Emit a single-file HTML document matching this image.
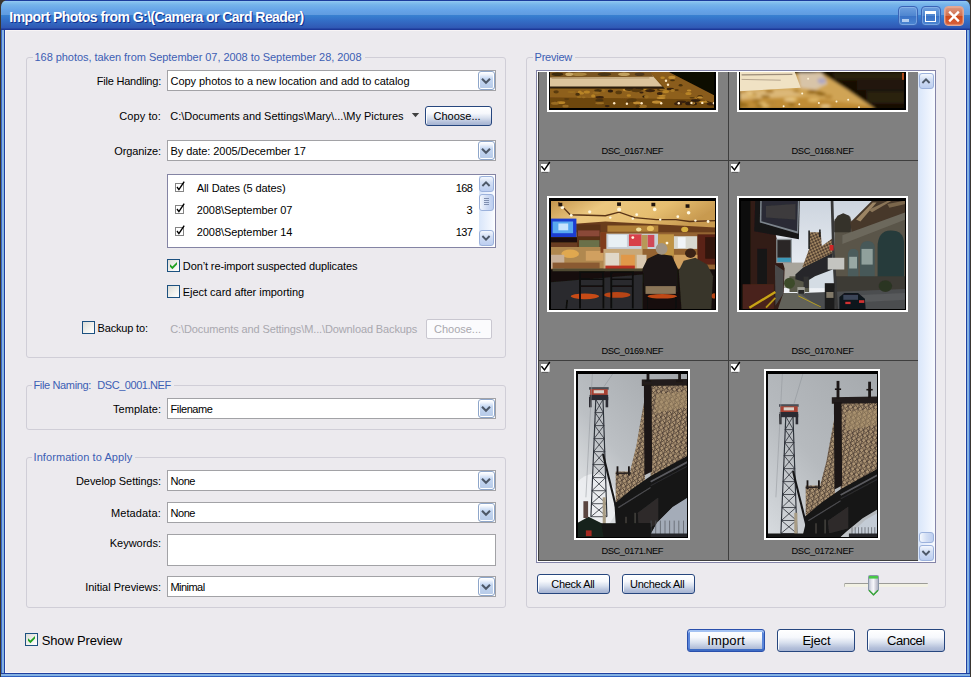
<!DOCTYPE html>
<html><head><meta charset="utf-8">
<style>
html,body{margin:0;padding:0;}
body{width:971px;height:677px;position:relative;overflow:hidden;background:#3a3630;font-family:"Liberation Sans",sans-serif;font-size:11px;color:#000;}
#win{position:absolute;left:1px;top:0;width:969px;height:677px;background:linear-gradient(to right,#3868c8 0,#3868c8 1px,#84b2e2 1.2px,#84b2e2 2.6px,#2040a0 3px,#2040a0 965px,#2040a0 966px,#84b2e2 966.4px,#84b2e2 967.8px,#3868c8 968px,#3868c8 969px);border-radius:7px 7px 0 0;overflow:hidden;}
#bot{position:absolute;left:0;top:673px;width:969px;height:4px;background:linear-gradient(to bottom,#2040a0 0,#2040a0 1px,#84b2e2 1.3px,#84b2e2 2.7px,#3060c0 3px,#3060c0 4px);}
#title{position:absolute;left:0;top:0;width:969px;height:30px;background:linear-gradient(to bottom,#1c3c9c 0,#1c3c9c 1px,#9ccaf4 1px,#86c2ee 2px,#74b2ea 5px,#66a4e8 10px,#609ce0 15px,#3880d0 15.5px,#3470c8 20px,#3058b4 28px,#1c3898 29px,#1c3898 30px);}
#client{position:absolute;left:4px;top:30px;width:961px;height:643px;background:#eceaee;border:1px solid #f8f4f5;box-sizing:border-box;}
#L{position:absolute;left:0;top:0;width:971px;height:677px;}
#L div,#L svg{position:absolute;}
.lbl{white-space:pre;}
.gb{border:1px solid #d0ced7;border-radius:3px;box-sizing:border-box;}
.gm{background:#eceaee;}
.combo{box-sizing:border-box;border:1px solid #a2a2a6;background:#fff;}
.dd{box-sizing:border-box;background:linear-gradient(to bottom,#ffffff 0,#f4f8fe 12%,#c6d8f2 38%,#bdd0ec 70%,#b6cae8 100%);border:1px solid #8ea6ca;border-radius:3px;box-shadow:inset 0 0 0 1px #fff;}
.btn{box-sizing:border-box;border:1px solid #26467e;border-radius:3px;background:linear-gradient(to bottom,#ffffff 0,#f6f8fc 35%,#d8e0ee 60%,#b4c0da 85%,#a6b4d2 100%);box-shadow:inset 1px 1px 0 rgba(255,255,255,0.9);}
.cb{width:13px;height:13px;box-sizing:border-box;border:1px solid #1c5180;background:linear-gradient(135deg,#dcdcd7 0,#f3f3ef 60%,#fff 100%);}
</style></head><body>
<div id="win"><div id="title"></div><div id="client"></div><div id="bot"></div></div>
<div id="L">
<div class="lbl" style="left:9.3px;top:8.8px;font-size:14px;line-height:16px;letter-spacing:-0.547px;color:#fff;font-weight:bold;text-shadow:1px 1px 0 #123090;">Import Photos from G:\(Camera or Card Reader)</div>
<div style="left:897.5px;top:6px;width:20px;height:20px;box-sizing:border-box;border:1px solid #3a64b6;border-radius:4px;background:linear-gradient(to bottom,#6e9fde 0,#4f86d0 48%,#3a72c6 52%,#4c86d2 100%);box-shadow:inset 0 0 0 1px rgba(170,205,245,0.45);"></div>
<div style="left:920.5px;top:6px;width:20px;height:20px;box-sizing:border-box;border:1px solid #3a64b6;border-radius:4px;background:linear-gradient(to bottom,#6e9fde 0,#4f86d0 48%,#3a72c6 52%,#4c86d2 100%);box-shadow:inset 0 0 0 1px rgba(170,205,245,0.45);"></div>
<div style="left:943.5px;top:6px;width:20px;height:20px;box-sizing:border-box;border:1px solid #e0a898;border-radius:4px;background:linear-gradient(to bottom,#dc9880 0,#d07050 48%,#cf4a1c 52%,#d8623c 100%);box-shadow:inset 0 0 0 1px rgba(255,220,200,0.25);"></div>
<div style="left:902px;top:19px;width:7px;height:3px;background:#b4cef0;"></div>
<div style="left:925px;top:11px;width:11px;height:11px;box-sizing:border-box;border:1.5px solid #fff;border-top:3px solid #fff;"></div>
<svg style="left:943.5px;top:6px" width="20" height="20"><path d="M5.2 5.6 L14.8 15.4 M14.8 5.6 L5.2 15.4" stroke="#fff" stroke-width="2.3" stroke-linecap="butt"/></svg>
<div class="gb" style="left:26px;top:57px;width:480px;height:301px;"></div>
<div class="gm" style="left:32.5px;top:51px;width:332.0px;height:13px;"></div>
<div class="lbl" style="left:34.5px;top:50.5px;font-size:11px;line-height:13px;letter-spacing:-0.051px;color:#3c5eb4;">168 photos, taken from September 07, 2008 to September 28, 2008</div>
<div class="gb" style="left:26px;top:385px;width:480px;height:45px;"></div>
<div class="gm" style="left:31.5px;top:379px;width:142.2px;height:13px;"></div>
<div class="lbl" style="left:33.5px;top:378.5px;font-size:11px;line-height:13px;letter-spacing:-0.354px;color:#3c5eb4;">File Naming:</div>
<div class="lbl" style="left:97.3px;top:378.5px;font-size:11px;line-height:13px;letter-spacing:-0.456px;color:#3c5eb4;">DSC_0001.NEF</div>
<div class="gb" style="left:26px;top:457px;width:480px;height:151px;"></div>
<div class="gm" style="left:31.5px;top:451px;width:103.80000000000001px;height:13px;"></div>
<div class="lbl" style="left:33.5px;top:450.5px;font-size:11px;line-height:13px;letter-spacing:0.078px;color:#3c5eb4;">Information to Apply</div>
<div class="gb" style="left:526px;top:57px;width:420px;height:551px;"></div>
<div class="gm" style="left:532.6px;top:51px;width:42.39999999999998px;height:13px;"></div>
<div class="lbl" style="left:534.6px;top:50.5px;font-size:11px;line-height:13px;letter-spacing:-0.246px;color:#3c5eb4;">Preview</div>
<div class="lbl" style="left:96.8px;top:74.8px;font-size:11px;line-height:13px;letter-spacing:-0.219px;color:#000;">File Handling:</div>
<div class="combo" style="left:167px;top:70px;width:329px;height:21px;"></div>
<div class="dd" style="left:478px;top:71px;width:17.3px;height:19px;"></div>
<svg style="left:480.1px;top:74.9px" width="12" height="12"><g transform="translate(6,6) scale(1.0)"><path d="M-4 -2.2 L0 1.8 L4 -2.2" fill="none" stroke="#4d5868" stroke-width="2.1" stroke-linecap="butt" stroke-linejoin="miter"/></g></svg>
<div class="lbl" style="left:170.5px;top:74.8px;font-size:11px;line-height:13px;letter-spacing:-0.041px;color:#000;">Copy photos to a new location and add to catalog</div>
<div class="lbl" style="left:119.2px;top:109.5px;font-size:11px;line-height:13px;letter-spacing:0.104px;color:#000;">Copy to:</div>
<div class="lbl" style="left:170.3px;top:109.5px;font-size:11px;line-height:13px;letter-spacing:-0.020px;color:#000;">C:\Documents and Settings\Mary\...\My Pictures</div>
<svg style="left:411px;top:112px" width="10" height="6"><path d="M0.8 1 L8.2 1 L4.5 5.2 Z" fill="#404040"/></svg>
<div class="btn" style="left:425px;top:106px;width:67px;height:20px;"></div>
<div class="lbl" style="left:433.6px;top:109.5px;font-size:11px;line-height:13px;letter-spacing:-0.022px;color:#000;">Choose...</div>
<div class="lbl" style="left:114.3px;top:144.8px;font-size:11px;line-height:13px;letter-spacing:-0.111px;color:#000;">Organize:</div>
<div class="combo" style="left:167px;top:140px;width:329px;height:21px;"></div>
<div class="dd" style="left:478px;top:141px;width:17.3px;height:19px;"></div>
<svg style="left:480.1px;top:144.9px" width="12" height="12"><g transform="translate(6,6) scale(1.0)"><path d="M-4 -2.2 L0 1.8 L4 -2.2" fill="none" stroke="#4d5868" stroke-width="2.1" stroke-linecap="butt" stroke-linejoin="miter"/></g></svg>
<div class="lbl" style="left:170.5px;top:144.8px;font-size:11px;line-height:13px;letter-spacing:-0.067px;color:#000;">By date: 2005/December 17</div>
<div style="left:167px;top:174px;width:329px;height:74px;box-sizing:border-box;border:1px solid #8484a4;background:#fff;"></div>
<svg style="left:174.5px;top:180.5px" width="12" height="12"><rect x="0" y="2" width="9" height="9" fill="#848484"/><rect x="1" y="3" width="7" height="7" fill="#fff"/><path d="M2 6 L3.9 8.6 L9.2 0.6" fill="none" stroke="#000" stroke-width="1.4"/></svg>
<div class="lbl" style="left:196.7px;top:181.7px;font-size:11px;line-height:13px;letter-spacing:-0.083px;color:#000;">All Dates (5 dates)</div>
<div class="lbl" style="left:455.8px;top:181.7px;font-size:11px;line-height:13px;letter-spacing:-0.586px;color:#000;">168</div>
<svg style="left:174.5px;top:202.5px" width="12" height="12"><rect x="0" y="2" width="9" height="9" fill="#848484"/><rect x="1" y="3" width="7" height="7" fill="#fff"/><path d="M2 6 L3.9 8.6 L9.2 0.6" fill="none" stroke="#000" stroke-width="1.4"/></svg>
<div class="lbl" style="left:196.7px;top:203.7px;font-size:11px;line-height:13px;letter-spacing:-0.055px;color:#000;">2008\September 07</div>
<div class="lbl" style="left:466.6px;top:203.7px;font-size:11px;line-height:13px;letter-spacing:-0.325px;color:#000;">3</div>
<svg style="left:174.5px;top:224.5px" width="12" height="12"><rect x="0" y="2" width="9" height="9" fill="#848484"/><rect x="1" y="3" width="7" height="7" fill="#fff"/><path d="M2 6 L3.9 8.6 L9.2 0.6" fill="none" stroke="#000" stroke-width="1.4"/></svg>
<div class="lbl" style="left:196.7px;top:225.7px;font-size:11px;line-height:13px;letter-spacing:-0.055px;color:#000;">2008\September 14</div>
<div class="lbl" style="left:455.8px;top:225.7px;font-size:11px;line-height:13px;letter-spacing:-0.586px;color:#000;">137</div>
<div style="left:479px;top:176px;width:14.800000000000011px;height:69.80000000000001px;background:linear-gradient(to right,#d9e6fa 0,#ecf2fd 60%,#f8fbff 100%);"></div>
<div style="left:479px;top:176px;width:14.800000000000011px;height:16px;box-sizing:border-box;border:1px solid #9cb2dc;border-radius:3px;background:linear-gradient(to bottom,#f4f8fe 0,#d2def4 40%,#bccef0 100%);"></div>
<svg style="left:480.4px;top:178.0px" width="12" height="12"><g transform="translate(6,6) scale(0.9)"><path d="M-4 2.2 L0 -1.8 L4 2.2" fill="none" stroke="#4d5868" stroke-width="2.1" stroke-linecap="butt" stroke-linejoin="miter"/></g></svg>
<div style="left:479px;top:229.8px;width:14.800000000000011px;height:16px;box-sizing:border-box;border:1px solid #9cb2dc;border-radius:3px;background:linear-gradient(to bottom,#f4f8fe 0,#d2def4 40%,#bccef0 100%);"></div>
<svg style="left:480.4px;top:232.3px" width="12" height="12"><g transform="translate(6,6) scale(0.9)"><path d="M-4 -2.2 L0 1.8 L4 -2.2" fill="none" stroke="#4d5868" stroke-width="2.1" stroke-linecap="butt" stroke-linejoin="miter"/></g></svg>
<div style="left:479px;top:193.6px;width:14.800000000000011px;height:17.700000000000017px;box-sizing:border-box;border:1px solid #9cb2dc;border-radius:3px;background:linear-gradient(to right,#f4f8fe 0,#d2def4 50%,#bccef0 100%);"></div>
<div style="left:483.5px;top:198.4px;width:5.800000000000011px;height:1px;background:#8090b0;"></div>
<div style="left:483.5px;top:200.4px;width:5.800000000000011px;height:1px;background:#8090b0;"></div>
<div style="left:483.5px;top:202.4px;width:5.800000000000011px;height:1px;background:#8090b0;"></div>
<div style="left:483.5px;top:204.4px;width:5.800000000000011px;height:1px;background:#8090b0;"></div>
<div class="cb" style="left:167px;top:259px;"></div>
<svg style="left:167px;top:259px" width="13" height="13"><path d="M3 5.2 L5.4 7.6 L10 3 L10 5.6 L5.4 10.2 L3 7.8 Z" fill="#21a121"/></svg>
<div class="lbl" style="left:182.8px;top:259.7px;font-size:11px;line-height:13px;letter-spacing:-0.112px;color:#000;">Don’t re-import suspected duplicates</div>
<div class="cb" style="left:167px;top:285px;"></div>
<div class="lbl" style="left:182.8px;top:285.5px;font-size:11px;line-height:13px;letter-spacing:-0.034px;color:#000;">Eject card after importing</div>
<div class="cb" style="left:82px;top:321px;"></div>
<div class="lbl" style="left:97.6px;top:321.5px;font-size:11px;line-height:13px;letter-spacing:-0.178px;color:#000;">Backup to:</div>
<div class="lbl" style="left:170.3px;top:322.8px;font-size:11px;line-height:13px;letter-spacing:-0.119px;color:#a9a8ae;">C:\Documents and Settings\M...\Download Backups</div>
<div style="left:425.5px;top:319px;width:66.5px;height:19.5px;box-sizing:border-box;border:1px solid #c9c7d0;border-radius:2px;background:#fbfbfd;"></div>
<div class="lbl" style="left:434.0px;top:323.1px;font-size:11px;line-height:13px;letter-spacing:-0.010px;color:#a9a8ae;">Choose...</div>
<div class="lbl" style="left:113.0px;top:402.7px;font-size:11px;line-height:13px;letter-spacing:0.033px;color:#000;">Template:</div>
<div class="combo" style="left:167px;top:398px;width:329px;height:21px;"></div>
<div class="dd" style="left:478px;top:399px;width:17.3px;height:19px;"></div>
<svg style="left:480.1px;top:402.9px" width="12" height="12"><g transform="translate(6,6) scale(1.0)"><path d="M-4 -2.2 L0 1.8 L4 -2.2" fill="none" stroke="#4d5868" stroke-width="2.1" stroke-linecap="butt" stroke-linejoin="miter"/></g></svg>
<div class="lbl" style="left:170.5px;top:402.8px;font-size:11px;line-height:13px;letter-spacing:-0.394px;color:#000;">Filename</div>
<div class="lbl" style="left:76.0px;top:474.5px;font-size:11px;line-height:13px;letter-spacing:-0.072px;color:#000;">Develop Settings:</div>
<div class="combo" style="left:167px;top:470px;width:329px;height:21px;"></div>
<div class="dd" style="left:478px;top:471px;width:17.3px;height:19px;"></div>
<svg style="left:480.1px;top:474.9px" width="12" height="12"><g transform="translate(6,6) scale(1.0)"><path d="M-4 -2.2 L0 1.8 L4 -2.2" fill="none" stroke="#4d5868" stroke-width="2.1" stroke-linecap="butt" stroke-linejoin="miter"/></g></svg>
<div class="lbl" style="left:170.5px;top:474.8px;font-size:11px;line-height:13px;letter-spacing:-0.449px;color:#000;">None</div>
<div class="lbl" style="left:110.9px;top:506.9px;font-size:11px;line-height:13px;letter-spacing:0.131px;color:#000;">Metadata<span style="position:static">:</span></div>
<div class="combo" style="left:167px;top:502px;width:329px;height:21px;"></div>
<div class="dd" style="left:478px;top:503px;width:17.3px;height:19px;"></div>
<svg style="left:480.1px;top:506.9px" width="12" height="12"><g transform="translate(6,6) scale(1.0)"><path d="M-4 -2.2 L0 1.8 L4 -2.2" fill="none" stroke="#4d5868" stroke-width="2.1" stroke-linecap="butt" stroke-linejoin="miter"/></g></svg>
<div class="lbl" style="left:170.5px;top:506.8px;font-size:11px;line-height:13px;letter-spacing:-0.449px;color:#000;">None</div>
<div class="lbl" style="left:109.8px;top:536.7px;font-size:11px;line-height:13px;letter-spacing:-0.018px;color:#000;">Keywords:</div>
<div class="combo" style="left:167px;top:534px;width:329px;height:32px;"></div>
<div class="lbl" style="left:85.2px;top:580.9px;font-size:11px;line-height:13px;letter-spacing:-0.037px;color:#000;">Initial Previews:</div>
<div class="combo" style="left:167px;top:576px;width:329px;height:21px;"></div>
<div class="dd" style="left:478px;top:577px;width:17.3px;height:19px;"></div>
<svg style="left:480.1px;top:580.9px" width="12" height="12"><g transform="translate(6,6) scale(1.0)"><path d="M-4 -2.2 L0 1.8 L4 -2.2" fill="none" stroke="#4d5868" stroke-width="2.1" stroke-linecap="butt" stroke-linejoin="miter"/></g></svg>
<div class="lbl" style="left:170.5px;top:580.8px;font-size:11px;line-height:13px;letter-spacing:-0.544px;color:#000;">Minimal</div>
<div class="cb" style="left:25px;top:633px;"></div>
<svg style="left:25px;top:633px" width="13" height="13"><path d="M3 5.2 L5.4 7.6 L10 3 L10 5.6 L5.4 10.2 L3 7.8 Z" fill="#21a121"/></svg>
<div class="lbl" style="left:41.8px;top:632.5px;font-size:13px;line-height:15px;letter-spacing:-0.173px;color:#000;">Show Preview</div>
<div class="btn" style="left:687px;top:629px;width:78px;height:23px;border-color:#2a50ac;box-shadow:inset 0 2px 0 0 #a4c2f2,inset 0 -2px 0 0 #3e6cc4,inset 2px 0 0 0 #5a86da,inset -2px 0 0 0 #5a86da;"></div>
<div class="lbl" style="left:707.2px;top:633.0px;font-size:13px;line-height:15px;letter-spacing:0.159px;color:#000;">Import</div>
<div class="btn" style="left:777px;top:629px;width:78px;height:23px;"></div>
<div class="lbl" style="left:802.4px;top:633.0px;font-size:13px;line-height:15px;letter-spacing:-0.201px;color:#000;">Eject</div>
<div class="btn" style="left:867px;top:629px;width:78px;height:23px;"></div>
<div class="lbl" style="left:887.0px;top:633.0px;font-size:13px;line-height:15px;letter-spacing:-0.445px;color:#000;">Cancel</div>
<div class="btn" style="left:537px;top:574px;width:73px;height:20px;"></div>
<div class="lbl" style="left:551.3px;top:577.5px;font-size:11px;line-height:13px;letter-spacing:-0.295px;color:#000;">Check All</div>
<div class="btn" style="left:622px;top:574px;width:73px;height:20px;"></div>
<div class="lbl" style="left:630.0px;top:577.5px;font-size:11px;line-height:13px;letter-spacing:-0.280px;color:#000;">Uncheck All</div>
<div style="left:844px;top:583px;width:84px;height:4px;box-sizing:border-box;border-top:1px solid #9c9c98;border-left:1px solid #b8b8b0;border-radius:1px;background:#f2f1e4;"></div>
<svg style="left:868px;top:575px" width="11" height="21"><defs><linearGradient id="sg" x1="0" x2="1" y1="0" y2="0"><stop offset="0" stop-color="#b8bccc"/><stop offset="0.3" stop-color="#e6e6ee"/><stop offset="0.5" stop-color="#f6f6fa"/><stop offset="0.75" stop-color="#ccccd8"/><stop offset="1" stop-color="#a8acbc"/></linearGradient></defs>
<path d="M1.5 0.5 L9.5 0.5 Q10.5 0.5 10.5 1.5 L10.5 15 L5.5 20.3 L0.5 15 L0.5 1.5 Q0.5 0.5 1.5 0.5Z" fill="url(#sg)" stroke="#8a96a8" stroke-width="1"/>
<path d="M1 1 L10 1 L10 3.6 L1 3.6Z" fill="#48c848"/>
<path d="M1 15.2 L5.5 19.8 L10 15.2" fill="none" stroke="#38a838" stroke-width="1.4"/></svg>
<div style="left:536px;top:70px;width:400px;height:493px;box-sizing:border-box;border:1px solid #8484a8;background:#fff;"></div>
<div style="left:538px;top:72px;width:380px;height:489px;background:#808080;overflow:hidden;" id="pv"></div>
<div style="left:538px;top:72px;width:1px;height:489px;background:#3e3e3e;"></div>
<div style="left:728px;top:72px;width:1px;height:489px;background:#3e3e3e;"></div>
<div style="left:538px;top:160px;width:380px;height:1px;background:#3e3e3e;"></div>
<div style="left:538px;top:360px;width:380px;height:1px;background:#3e3e3e;"></div>
<div style="left:538px;top:560px;width:380px;height:1px;background:#3e3e3e;"></div>
<div style="left:918px;top:72.5px;width:16.5px;height:488.0px;background:linear-gradient(to right,#d9e6fa 0,#ecf2fd 60%,#f8fbff 100%);"></div>
<div style="left:919px;top:72.5px;width:14.600000000000023px;height:16px;box-sizing:border-box;border:1px solid #9cb2dc;border-radius:3px;background:linear-gradient(to bottom,#f4f8fe 0,#d2def4 40%,#bccef0 100%);"></div>
<svg style="left:920.3px;top:74.5px" width="12" height="12"><g transform="translate(6,6) scale(0.9)"><path d="M-4 2.2 L0 -1.8 L4 2.2" fill="none" stroke="#4d5868" stroke-width="2.1" stroke-linecap="butt" stroke-linejoin="miter"/></g></svg>
<div style="left:919px;top:544.5px;width:14.600000000000023px;height:16px;box-sizing:border-box;border:1px solid #9cb2dc;border-radius:3px;background:linear-gradient(to bottom,#f4f8fe 0,#d2def4 40%,#bccef0 100%);"></div>
<svg style="left:920.3px;top:547.0px" width="12" height="12"><g transform="translate(6,6) scale(0.9)"><path d="M-4 -2.2 L0 1.8 L4 -2.2" fill="none" stroke="#4d5868" stroke-width="2.1" stroke-linecap="butt" stroke-linejoin="miter"/></g></svg>
<div style="left:919px;top:531.5px;width:14.600000000000023px;height:11.5px;box-sizing:border-box;border:1px solid #9cb2dc;border-radius:3px;background:linear-gradient(to right,#f4f8fe 0,#d2def4 50%,#bccef0 100%);"></div>
<svg style="left:540px;top:160px" width="13" height="14"><rect x="1" y="4" width="8.6" height="7.8" fill="#fff"/><rect x="2" y="12" width="6" height="0.8" fill="#585858"/><path d="M1.4 6.3 L4.5 9.9 L9.8 2" fill="none" stroke="#000" stroke-width="1.45"/></svg>
<svg style="left:540px;top:360px" width="13" height="14"><rect x="1" y="4" width="8.6" height="7.8" fill="#fff"/><rect x="2" y="12" width="6" height="0.8" fill="#585858"/><path d="M1.4 6.3 L4.5 9.9 L9.8 2" fill="none" stroke="#000" stroke-width="1.45"/></svg>
<svg style="left:730px;top:160px" width="13" height="14"><rect x="1" y="4" width="8.6" height="7.8" fill="#fff"/><rect x="2" y="12" width="6" height="0.8" fill="#585858"/><path d="M1.4 6.3 L4.5 9.9 L9.8 2" fill="none" stroke="#000" stroke-width="1.45"/></svg>
<svg style="left:730px;top:360px" width="13" height="14"><rect x="1" y="4" width="8.6" height="7.8" fill="#fff"/><rect x="2" y="12" width="6" height="0.8" fill="#585858"/><path d="M1.4 6.3 L4.5 9.9 L9.8 2" fill="none" stroke="#000" stroke-width="1.45"/></svg>
<div class="lbl" style="left:601.4px;top:145.5px;font-size:9.3px;line-height:11.3px;letter-spacing:-0.423px;color:#000;">DSC_0167.NEF</div>
<div class="lbl" style="left:791.5px;top:145.5px;font-size:9.3px;line-height:11.3px;letter-spacing:-0.389px;color:#000;">DSC_0168.NEF</div>
<div class="lbl" style="left:601.4px;top:345.6px;font-size:9.3px;line-height:11.3px;letter-spacing:-0.423px;color:#000;">DSC_0169.NEF</div>
<div class="lbl" style="left:791.5px;top:345.6px;font-size:9.3px;line-height:11.3px;letter-spacing:-0.389px;color:#000;">DSC_0170.NEF</div>
<div class="lbl" style="left:601.4px;top:545.6px;font-size:9.3px;line-height:11.3px;letter-spacing:-0.423px;color:#000;">DSC_0171.NEF</div>
<div class="lbl" style="left:791.5px;top:545.6px;font-size:9.3px;line-height:11.3px;letter-spacing:-0.389px;color:#000;">DSC_0172.NEF</div>
<div style="left:547px;top:196px;width:171px;height:116px;background:#fff;"></div>
<div style="left:549px;top:198px;width:167px;height:112px;background:#000;"></div>
<svg style="left:550.5px;top:200.7px" width="164" height="108.3" viewBox="0 0 164 108.3" preserveAspectRatio="none"><defs><filter id="ba1" x="-5%" y="-5%" width="110%" height="110%"><feGaussianBlur stdDeviation="0.5"/></filter><filter id="ba2" x="-5%" y="-5%" width="110%" height="110%"><feGaussianBlur stdDeviation="1.6"/></filter></defs><defs><linearGradient id="ceil" x1="0" x2="1" y1="0" y2="0.3"><stop offset="0" stop-color="#c09048"/><stop offset="0.35" stop-color="#ecc880"/><stop offset="0.7" stop-color="#e6be70"/><stop offset="1" stop-color="#c89a50"/></linearGradient></defs><g filter="url(#ba1)"><rect x="-2" y="-2" width="170" height="115" fill="#3a2414"/><rect x="-2.3" y="-2.0" width="168.3" height="29.4" fill="url(#ceil)" /><polygon points="0.0,24.5 54.4,20.5 164.6,26.4 164.6,35.2 54.4,31.3 0.0,38.2" fill="#6a3c1c" /><rect x="0.0" y="31.3" width="164.6" height="37.2" fill="#946430" /><rect x="0.0" y="17.6" width="25.4" height="18.6" fill="#1c3cd0" /><rect x="1.6" y="20.5" width="20.5" height="11.7" fill="#58a8f0" /><rect x="7.4" y="22.5" width="9.8" height="6.8" fill="#c8e4fc" /><rect x="0.0" y="36.2" width="26.6" height="5.5" fill="#1a100a" /><rect x="0.0" y="41.7" width="26.0" height="4.7" fill="#6a3c20" /><rect x="26.0" y="23.5" width="23.5" height="24.5" fill="#5a3018" /><rect x="27.0" y="29.4" width="21.5" height="5.9" fill="#8a4838" /><rect x="28.0" y="39.1" width="20.5" height="8.8" fill="#6a7048" /><rect x="0.0" y="46.0" width="52.4" height="21.5" fill="#b08850" /><ellipse cx="19.2" cy="52.8" rx="8.8" ry="4.3" fill="#e0a850" /><rect x="0.0" y="53.8" width="13.3" height="13.7" fill="#c8b098" /><rect x="34.8" y="49.9" width="17.6" height="9.8" fill="#d0a060" /><rect x="1.6" y="61.6" width="47.0" height="5.9" fill="#8a5a30" /><rect x="49.5" y="31.3" width="5.9" height="20.5" fill="#803c1c" /><rect x="55.4" y="32.7" width="51.9" height="15.3" fill="#c8d0d8" /><rect x="57.3" y="33.9" width="18.6" height="12.1" fill="#e8f0f4" /><rect x="77.9" y="33.3" width="12.7" height="11.7" fill="#d84048" /><rect x="96.5" y="33.9" width="6.8" height="12.1" fill="#d04858" /><rect x="90.6" y="33.9" width="5.9" height="14.1" fill="#b89858" /><rect x="107.2" y="33.3" width="15.7" height="21.5" fill="#c09444" /><rect x="122.9" y="35.2" width="23.5" height="12.7" fill="#d8d8d0" /><rect x="126.8" y="36.2" width="7.8" height="10.8" fill="#f0f4f8" /><rect x="146.4" y="33.3" width="18.2" height="30.3" fill="#5a2414" /><rect x="154.2" y="36.2" width="10.4" height="21.5" fill="#301410" /><rect x="52.4" y="47.9" width="39.1" height="20.5" fill="#c8a878" /><rect x="54.4" y="51.9" width="13.7" height="15.7" fill="#e0d8c8" /><rect x="70.1" y="53.8" width="13.7" height="12.7" fill="#e09848" /><rect x="85.7" y="53.8" width="9.8" height="13.7" fill="#d8c8b0" /><rect x="122.9" y="53.8" width="23.5" height="13.7" fill="#d0a060" /><rect x="54.4" y="64.6" width="29.4" height="4.5" fill="#b83020" /><rect x="56.4" y="24.5" width="50.9" height="6.3" fill="#b08038" /><ellipse cx="99.4" cy="27.4" rx="3.5" ry="2.7" fill="#e8c060" /><ellipse cx="133.7" cy="28.4" rx="3.5" ry="2.7" fill="#d8b040" /><ellipse cx="87.7" cy="28.4" rx="2.7" ry="2.0" fill="#f0e0a0" /><rect x="-2.3" y="68.5" width="168.3" height="44.0" fill="#16110c" /><polygon points="0.0,81.2 91.6,73.4 91.6,112.5 0.0,112.5" fill="#2a2c2e" /><rect x="1.6" y="67.5" width="90.0" height="2.7" fill="#504830" /><polygon points="91.6,67.5 96.5,57.7 107.2,52.8 120.9,54.8 126.8,67.5 126.8,91.0 93.5,91.0" fill="#1a1612" /><ellipse cx="110.6" cy="47.9" rx="5.9" ry="5.9" fill="#a09484" /><polygon points="127.8,69.5 132.7,59.7 144.4,56.8 156.2,63.6 162.0,75.3 160.1,111.5 130.7,111.5" fill="#38342a" /><ellipse cx="139.5" cy="52.3" rx="5.5" ry="4.7" fill="#3a2418" /><rect x="94.5" y="85.1" width="30.3" height="7.8" fill="#8a7458" /><ellipse cx="33.9" cy="95.3" rx="14.1" ry="2.9" fill="#c84c18" /><ellipse cx="66.1" cy="93.9" rx="13.3" ry="2.9" fill="#b84414" /><ellipse cx="111.2" cy="95.3" rx="14.7" ry="2.3" fill="#c04818" /><ellipse cx="163.0" cy="94.9" rx="2.3" ry="2.7" fill="#b84414" /><polyline points="29.0,107.6 29.0,71.4 52.4,71.4 52.4,107.6" fill="none" stroke="#0c0a08" stroke-width="1.76" /><polyline points="29.0,78.3 52.4,78.3" fill="none" stroke="#0c0a08" stroke-width="1.37" /><polyline points="29.0,85.1 52.4,85.1" fill="none" stroke="#0c0a08" stroke-width="1.37" /><polyline points="60.3,107.6 60.3,71.4 81.8,71.4 81.8,107.6" fill="none" stroke="#0c0a08" stroke-width="1.76" /><polyline points="60.3,78.3 81.8,78.3" fill="none" stroke="#0c0a08" stroke-width="1.37" /><polyline points="60.3,85.1 81.8,85.1" fill="none" stroke="#0c0a08" stroke-width="1.37" /><polyline points="15.3,107.6 16.2,98.8" fill="none" stroke="#0c0a08" stroke-width="1.57" /><polyline points="96.5,107.6 96.5,95.9" fill="none" stroke="#0c0a08" stroke-width="1.57" /><polyline points="124.9,107.6 124.9,95.9" fill="none" stroke="#0c0a08" stroke-width="1.57" /><polyline points="7.4,1.4 19.2,13.7 54.4,14.7 68.1,11.2 83.8,16.6 105.3,18.6 124.9,18.6 138.6,20.5 164.6,19.6" fill="none" stroke="#5a3418" stroke-width="1.37" /></g><g filter="url(#ba1)"><circle cx="11.4" cy="6.5" r="1.8" fill="#fff8e0" /><circle cx="20.2" cy="14.3" r="1.4" fill="#fff8e0" /><circle cx="38.7" cy="10.8" r="1.6" fill="#fff8e0" /><circle cx="68.1" cy="8.4" r="2.0" fill="#fff8e0" /><circle cx="59.3" cy="16.6" r="1.2" fill="#fff8e0" /><circle cx="81.8" cy="17.6" r="1.2" fill="#fff8e0" /><circle cx="85.7" cy="13.7" r="1.4" fill="#fff8e0" /><circle cx="103.7" cy="8.4" r="1.8" fill="#fff8e0" /><circle cx="109.2" cy="18.6" r="1.2" fill="#fff8e0" /><circle cx="126.8" cy="15.7" r="1.4" fill="#fff8e0" /><circle cx="137.6" cy="11.7" r="1.8" fill="#fff8e0" /><circle cx="144.4" cy="19.6" r="1.2" fill="#fff8e0" /><circle cx="157.1" cy="20.5" r="1.4" fill="#fff8e0" /><circle cx="81.8" cy="36.6" r="1.4" fill="#fff8e0" /><circle cx="116.0" cy="42.1" r="1.4" fill="#fff8e0" /><rect x="66.1" y="1.4" width="3.9" height="3.5" fill="#20140c" /><rect x="100.4" y="1.8" width="3.9" height="3.5" fill="#20140c" /><rect x="134.6" y="3.3" width="3.9" height="3.5" fill="#20140c" /><rect x="7.4" y="1.8" width="3.9" height="3.5" fill="#20140c" /></g></svg>
<div style="left:737px;top:196px;width:171px;height:116px;background:#fff;"></div>
<div style="left:739px;top:198px;width:167px;height:112px;background:#000;"></div>
<svg style="left:740.5px;top:200.7px" width="164" height="108.3" viewBox="0 0 164 108.3" preserveAspectRatio="none"><defs><filter id="st1" x="-5%" y="-5%" width="110%" height="110%"><feGaussianBlur stdDeviation="0.5"/></filter><filter id="st2" x="-5%" y="-5%" width="110%" height="110%"><feGaussianBlur stdDeviation="1.6"/></filter></defs><defs><linearGradient id="sky" x1="0" x2="0" y1="0" y2="1"><stop offset="0" stop-color="#ccd4de"/><stop offset="0.6" stop-color="#e8ecf2"/><stop offset="1" stop-color="#f4f6f8"/></linearGradient></defs><g filter="url(#st1)"><rect x="-2" y="-2" width="170" height="115" fill="url(#sky)"/><rect x="42.7" y="61.6" width="25.4" height="25.4" fill="#a8a49c" /><rect x="68.1" y="67.5" width="25.4" height="19.6" fill="#d4dce4" /><rect x="48.5" y="75.3" width="19.6" height="15.7" fill="#585848" /><defs><pattern id="sttr" width="4" height="4" patternUnits="userSpaceOnUse" patternTransform="rotate(20)"><rect width="4" height="4" fill="#a08460"/><path d="M0 0 L4 4 M4 0 L0 4" stroke="#4a3a2c" stroke-width="0.9"/></pattern></defs><polygon points="61.3,66.5 68.1,47.9 68.1,31.3 79.8,31.3 80.8,45.0 91.6,37.2 91.6,53.8 72.0,64.6" fill="url(#sttr)" /><polygon points="54.4,73.4 62.2,66.5 91.6,51.9 91.6,68.5 74.0,75.3 64.2,81.2 54.4,78.3" fill="#26282a" /><polyline points="68.1,29.4 68.1,47.9" fill="none" stroke="#202020" stroke-width="1.57" /><polyline points="78.9,28.4 78.9,36.2" fill="none" stroke="#202020" stroke-width="1.57" /><rect x="62.6" y="75.3" width="5.1" height="11.7" fill="#303030" /><polygon points="93.5,18.6 101.4,12.7 109.2,15.7 111.2,22.5 164.6,1.0 164.6,111.5 93.5,111.5" fill="#5a5448" /><polygon points="93.2,20.5 96.5,14.7 102.3,12.3 108.2,14.7 110.2,23.5 109.6,31.3 93.2,31.3" fill="#34302c" /><polygon points="109.2,21.5 130.7,0.0 164.6,-1.0 164.6,12.7 111.2,33.3" fill="#46382a" /><polygon points="101.4,34.2 164.6,11.2 164.6,18.6 101.4,43.1" fill="#6c685c" /><polygon points="115.1,18.6 131.7,1.4 135.6,1.4 119.4,20.5" fill="#9c8464" /><polygon points="127.8,8.8 146.4,0.0 150.3,0.0 131.1,11.2" fill="#8a7458" /><polygon points="146.4,2.9 164.6,-0.6 164.6,2.9 148.3,6.8" fill="#7a664c" /><path d="M106.8 83.2 L106.8 54.9 Q106.8 47.7 112.1 47.7 Q117.4 47.7 117.4 52.5 L117.4 83.2 Z" fill="#4c5c5c"/><path d="M119.0 84.7 L119.0 49.9 Q119.0 39.9 126.3 39.9 Q133.7 39.9 133.7 46.7 L133.7 84.7 Z" fill="#465858"/><path d="M136.6 82.8 L136.6 46.5 Q136.6 29.5 149.8 29.5 Q163.0 29.5 163.0 42.6 L163.0 82.8 Z" fill="#263a3a"/><rect x="108.2" y="55.8" width="7.8" height="11.7" fill="#98a8a4" /><rect x="120.5" y="47.9" width="11.2" height="15.7" fill="#90a09c" /><rect x="93.5" y="75.3" width="71.0" height="15.7" fill="#3c3a34" /><polygon points="34.8,93.0 164.6,88.1 164.6,111.5 34.8,111.5" fill="#4c4e50" /><polygon points="35.8,92.0 58.3,92.0 85.7,111.5 35.8,111.5" fill="#62625a" /><polygon points="99.4,94.9 164.6,92.0 164.6,98.8 107.2,101.8" fill="#585a5c" /><polygon points="0.0,0.0 19.2,0.0 34.8,34.2 43.6,67.5 42.7,91.0 35.8,111.5 -2.3,111.5" fill="#321a14" /><rect x="-2.3" y="-2.0" width="11.7" height="113.5" fill="#0e0808" /><rect x="16.2" y="47.9" width="9.8" height="35.2" fill="#181414" /><polygon points="33.9,63.6 42.7,69.5 42.3,93.0 34.4,104.7" fill="#484848" /><rect x="1.6" y="83.2" width="31.3" height="28.4" fill="#4a241a" /><polygon points="14.3,0.0 58.7,0.0 57.9,38.2 13.3,30.3" fill="#141414" /><polygon points="19.2,0.0 58.3,0.0 57.3,32.7 18.8,21.5" fill="#7c848c" /><polygon points="20.7,0.0 56.9,0.0 56.0,30.3 20.4,20.2" fill="#2a2c34" /><polygon points="25.0,4.9 54.4,2.9 54.4,18.6 25.0,16.6" fill="#3c3a3c" /><rect x="35.2" y="37.8" width="15.7" height="24.3" fill="#8c9498" /><rect x="36.4" y="39.1" width="13.3" height="17.6" fill="#2c2828" /><rect x="36.4" y="56.8" width="13.3" height="4.1" fill="#3c98b8" /><polyline points="8.4,106.7 34.4,91.0" fill="none" stroke="#c8a418" stroke-width="2.35" /><polyline points="25.0,106.7 34.4,96.9" fill="none" stroke="#b89818" stroke-width="1.76" /><polyline points="57.3,94.9 79.8,105.9" fill="none" stroke="#b8a020" stroke-width="0.98" /><polyline points="91.0,-2.0 92.6,53.8 95.9,111.5" fill="none" stroke="#383838" stroke-width="2.74" /><rect x="86.7" y="56.8" width="16.6" height="11.7" fill="#c4c4c0" /><rect x="88.6" y="44.0" width="3.9" height="5.5" fill="#d02828" /><rect x="83.8" y="82.2" width="9.8" height="29.4" fill="#1c1c1c" /><rect x="85.3" y="91.0" width="7.2" height="5.9" fill="#807868" /><polygon points="98.4,95.9 103.3,92.0 117.0,92.0 123.9,97.8 124.9,111.5 98.4,111.5" fill="#10141c" /><rect x="102.3" y="93.9" width="14.7" height="4.9" fill="#3a4458" /><rect x="104.3" y="100.8" width="5.3" height="2.3" fill="#d03030" /><rect x="118.0" y="99.2" width="5.3" height="2.7" fill="#d03030" /><rect x="56.4" y="86.1" width="7.4" height="6.8" fill="#a0a098" /><rect x="57.3" y="89.0" width="5.9" height="3.9" fill="#282828" /><ellipse cx="48.5" cy="82.2" rx="5.5" ry="5.5" fill="#3c4c2c" /><ellipse cx="144.4" cy="85.1" rx="6.8" ry="5.9" fill="#2c3424" /></g></svg>
<div style="left:574px;top:369px;width:116px;height:171px;background:#fff;"></div>
<div style="left:576px;top:371px;width:112px;height:167px;background:#000;"></div>
<svg style="left:577.5px;top:373.7px" width="109" height="163.3" viewBox="0 0 109 163.3" preserveAspectRatio="none"><defs><filter id="p1a" x="-5%" y="-5%" width="110%" height="110%"><feGaussianBlur stdDeviation="0.5"/></filter><filter id="p1b" x="-5%" y="-5%" width="110%" height="110%"><feGaussianBlur stdDeviation="1.6"/></filter></defs><defs><linearGradient id="p1sky" x1="0.9" x2="0.1" y1="0" y2="1"><stop offset="0" stop-color="#a2a6aa"/><stop offset="0.55" stop-color="#bcc0c4"/><stop offset="1" stop-color="#eef0f2"/></linearGradient><pattern id="p1tr" width="5" height="5" patternUnits="userSpaceOnUse" patternTransform="rotate(12)"><rect width="5" height="5" fill="#ac9474"/><path d="M0 0 L5 5 M5 0 L0 5" stroke="#46382e" stroke-width="0.9"/><rect x="0" y="0" width="0.8" height="5" fill="#5c4c40"/></pattern></defs><g filter="url(#p1a)"><rect x="-2" y="-2" width="115" height="170" fill="url(#p1sky)"/><ellipse cx="15.7" cy="128.5" rx="23.3" ry="28.4" fill="#f2f4f6" opacity="0.7"/><polygon points="72.6,10.0 110.1,10.0 110.1,83.2 72.6,102.6" fill="url(#p1tr)" /><polygon points="77.8,19.9 110.1,17.3 110.1,32.8 77.8,39.3" fill="#a8906c" opacity="0.55"/><polygon points="66.9,23.7 66.9,107.8 53.5,117.6 52.4,96.1 58.4,71.6 62.8,45.7" fill="url(#p1tr)" /><polygon points="55.0,97.4 55.0,118.1 37.7,131.1 37.7,97.4" fill="url(#p1tr)" /><polygon points="63.8,5.6 110.1,4.9 110.1,11.6 63.8,12.1" fill="#221c1a" /><polygon points="65.9,10.8 73.6,10.8 74.1,97.4 66.4,101.3" fill="#1c1614" /><polyline points="70.0,-1.3 70.0,6.9" fill="none" stroke="#1a1614" stroke-width="2.84" /><polyline points="101.6,-0.6 101.6,6.4" fill="none" stroke="#1a1614" stroke-width="2.84" /><polyline points="66.9,6.9 73.1,6.9" fill="none" stroke="#1a1614" stroke-width="1.55" /><polyline points="98.4,7.4 104.7,7.4" fill="none" stroke="#1a1614" stroke-width="1.55" /><polyline points="39.5,92.3 39.5,101.3" fill="none" stroke="#1a1614" stroke-width="1.81" /><polyline points="50.9,92.3 50.9,101.3" fill="none" stroke="#1a1614" stroke-width="1.81" /><polyline points="37.7,99.5 53.2,99.0" fill="none" stroke="#2a2422" stroke-width="1.55" /><polygon points="36.4,129.8 54.0,115.0 72.6,102.1 110.1,81.4 110.1,124.6 94.6,133.6 79.1,149.2 70.0,165.2 33.8,165.2 37.7,149.2" fill="#141414" /><polyline points="72.6,107.8 110.1,87.6" fill="none" stroke="#5a5a5e" stroke-width="1.81" /><polyline points="40.3,133.6 72.6,113.5" fill="none" stroke="#4a4a4e" stroke-width="1.29" /><polygon points="59.7,138.8 80.3,123.3 80.3,149.2 61.0,159.5" fill="#2e2c2c" /><polyline points="57.1,138.8 57.1,162.1" fill="none" stroke="#4e4a46" stroke-width="1.29" /><polyline points="48.0,142.7 48.0,162.1" fill="none" stroke="#5a5650" stroke-width="1.03" /><polyline points="72.6,111.7 110.1,91.8" fill="none" stroke="#2a2a2c" stroke-width="1.29" /><polygon points="110.1,123.3 94.6,133.1 79.1,148.6 70.0,165.2 110.1,165.2" fill="#a4acb8" /><polyline points="73.1,165.2 73.1,146.6" fill="none" stroke="#50545a" stroke-width="0.65" /><polyline points="77.7,165.2 77.7,146.6" fill="none" stroke="#50545a" stroke-width="0.65" /><polyline points="82.4,165.2 82.4,146.6" fill="none" stroke="#50545a" stroke-width="0.65" /><polyline points="87.0,165.2 87.0,146.6" fill="none" stroke="#50545a" stroke-width="0.65" /><polyline points="91.6,165.2 91.6,146.6" fill="none" stroke="#50545a" stroke-width="0.65" /><polyline points="96.2,165.2 96.2,146.6" fill="none" stroke="#50545a" stroke-width="0.65" /><polyline points="100.8,165.2 100.8,146.6" fill="none" stroke="#50545a" stroke-width="0.65" /><polyline points="105.5,165.2 105.5,146.6" fill="none" stroke="#50545a" stroke-width="0.65" /><rect x="70.0" y="159.5" width="40.1" height="5.7" fill="#26282c" /><rect x="11.0" y="13.1" width="19.7" height="2.6" fill="#4c5056" /><rect x="12.1" y="15.2" width="17.6" height="6.2" fill="#a84030" /><rect x="15.7" y="16.2" width="10.3" height="3.1" fill="#d8d0c8" /><rect x="11.6" y="20.9" width="18.6" height="5.2" fill="#2c2c30" /><rect x="11.0" y="23.0" width="2.6" height="10.3" fill="#2c2c30" /><rect x="27.6" y="23.0" width="2.6" height="10.3" fill="#2c2c30" /><polyline points="17.8,25.5 12.9,142.7" fill="none" stroke="#2c3038" stroke-width="1.16" /><polyline points="25.0,25.5 28.9,142.7" fill="none" stroke="#2c3038" stroke-width="1.16" /><polyline points="17.8,25.5 25.4,38.6" fill="none" stroke="#2c3038" stroke-width="0.81" /><polyline points="25.0,25.5 17.2,38.6" fill="none" stroke="#2c3038" stroke-width="0.81" /><polyline points="17.2,38.6 25.4,38.6" fill="none" stroke="#2c3038" stroke-width="0.81" /><polyline points="17.2,38.6 25.9,51.6" fill="none" stroke="#2c3038" stroke-width="0.81" /><polyline points="25.4,38.6 16.7,51.6" fill="none" stroke="#2c3038" stroke-width="0.81" /><polyline points="16.7,51.6 25.9,51.6" fill="none" stroke="#2c3038" stroke-width="0.81" /><polyline points="16.7,51.6 26.3,64.6" fill="none" stroke="#2c3038" stroke-width="0.81" /><polyline points="25.9,51.6 16.1,64.6" fill="none" stroke="#2c3038" stroke-width="0.81" /><polyline points="16.1,64.6 26.3,64.6" fill="none" stroke="#2c3038" stroke-width="0.81" /><polyline points="16.1,64.6 26.7,77.6" fill="none" stroke="#2c3038" stroke-width="0.81" /><polyline points="26.3,64.6 15.6,77.6" fill="none" stroke="#2c3038" stroke-width="0.81" /><polyline points="15.6,77.6 26.7,77.6" fill="none" stroke="#2c3038" stroke-width="0.81" /><polyline points="15.6,77.6 27.2,90.6" fill="none" stroke="#2c3038" stroke-width="0.81" /><polyline points="26.7,77.6 15.0,90.6" fill="none" stroke="#2c3038" stroke-width="0.81" /><polyline points="15.0,90.6 27.2,90.6" fill="none" stroke="#2c3038" stroke-width="0.81" /><polyline points="15.0,90.6 27.6,103.6" fill="none" stroke="#2c3038" stroke-width="0.81" /><polyline points="27.2,90.6 14.5,103.6" fill="none" stroke="#2c3038" stroke-width="0.81" /><polyline points="14.5,103.6 27.6,103.6" fill="none" stroke="#2c3038" stroke-width="0.81" /><polyline points="14.5,103.6 28.0,116.7" fill="none" stroke="#2c3038" stroke-width="0.81" /><polyline points="27.6,103.6 13.9,116.7" fill="none" stroke="#2c3038" stroke-width="0.81" /><polyline points="13.9,116.7 28.0,116.7" fill="none" stroke="#2c3038" stroke-width="0.81" /><polyline points="13.9,116.7 28.5,129.7" fill="none" stroke="#2c3038" stroke-width="0.81" /><polyline points="28.0,116.7 13.4,129.7" fill="none" stroke="#2c3038" stroke-width="0.81" /><polyline points="13.4,129.7 28.5,129.7" fill="none" stroke="#2c3038" stroke-width="0.81" /><polyline points="13.4,129.7 28.9,142.7" fill="none" stroke="#2c3038" stroke-width="0.81" /><polyline points="28.5,129.7 12.9,142.7" fill="none" stroke="#2c3038" stroke-width="0.81" /><polyline points="12.9,142.7 28.9,142.7" fill="none" stroke="#2c3038" stroke-width="0.81" /><polyline points="25.0,79.9 41.0,145.3" fill="none" stroke="#161618" stroke-width="2.07" /><rect x="24.7" y="123.3" width="3.1" height="37.5" fill="#a89c84" /><rect x="-1.1" y="149.2" width="73.7" height="16.8" fill="#141614" /><polygon points="-1.1,149.2 10.5,142.7 23.5,149.2 26.0,165.2 -1.1,165.2" fill="#18221a" /><rect x="7.9" y="156.4" width="5.7" height="5.7" fill="#a42c24" /><rect x="5.4" y="127.2" width="4.7" height="16.8" fill="#5a4440" /><polyline points="14.4,-0.8 7.9,123.3" fill="none" stroke="#90949a" stroke-width="0.52" /><polyline points="35.1,-0.8 26.0,12.6" fill="none" stroke="#8c9096" stroke-width="0.52" /></g></svg>
<div style="left:764px;top:369px;width:116px;height:171px;background:#fff;"></div>
<div style="left:766px;top:371px;width:112px;height:167px;background:#000;"></div>
<svg style="left:767.5px;top:373.7px" width="109" height="163.3" viewBox="0 0 109 163.3" preserveAspectRatio="none"><defs><filter id="p2a" x="-5%" y="-5%" width="110%" height="110%"><feGaussianBlur stdDeviation="0.5"/></filter><filter id="p2b" x="-5%" y="-5%" width="110%" height="110%"><feGaussianBlur stdDeviation="1.6"/></filter></defs><defs><linearGradient id="p2sky" x1="0.9" x2="0.1" y1="0" y2="1"><stop offset="0" stop-color="#a6aaae"/><stop offset="0.55" stop-color="#b6babe"/><stop offset="1" stop-color="#d6dade"/></linearGradient><pattern id="p2tr" width="5" height="5" patternUnits="userSpaceOnUse" patternTransform="rotate(12)"><rect width="5" height="5" fill="#ac9474"/><path d="M0 0 L5 5 M5 0 L0 5" stroke="#46382e" stroke-width="0.9"/><rect x="0" y="0" width="0.8" height="5" fill="#5c4c40"/></pattern></defs><g filter="url(#p2a)"><rect x="-2" y="-2" width="115" height="170" fill="url(#p2sky)"/><polygon points="72.6,27.6 110.1,27.6 110.1,99.0 72.6,116.7" fill="url(#p2tr)" /><polygon points="77.8,37.4 110.1,34.9 110.1,50.4 77.8,56.8" fill="#a8906c" opacity="0.55"/><polygon points="66.9,41.3 66.9,121.9 53.5,131.3 52.4,110.2 58.4,87.4 62.8,63.3" fill="url(#p2tr)" /><polygon points="55.0,111.5 55.0,131.3 37.7,143.4 37.7,111.5" fill="url(#p2tr)" /><polygon points="63.8,23.2 110.1,22.4 110.1,29.2 63.8,29.7" fill="#221c1a" /><polygon points="65.9,28.4 73.6,28.4 74.1,111.5 66.4,115.4" fill="#1c1614" /><polyline points="70.0,6.9 70.0,24.5" fill="none" stroke="#1a1614" stroke-width="2.84" /><polyline points="101.6,7.7 101.6,24.0" fill="none" stroke="#1a1614" stroke-width="2.84" /><polyline points="66.9,15.2 73.1,15.2" fill="none" stroke="#1a1614" stroke-width="1.55" /><polyline points="98.4,15.7 104.7,15.7" fill="none" stroke="#1a1614" stroke-width="1.55" /><polyline points="39.5,106.3 39.5,115.4" fill="none" stroke="#1a1614" stroke-width="1.81" /><polyline points="50.9,106.3 50.9,115.4" fill="none" stroke="#1a1614" stroke-width="1.81" /><polyline points="37.7,113.6 53.2,113.1" fill="none" stroke="#2a2422" stroke-width="1.55" /><polygon points="36.4,143.0 54.0,128.2 72.6,115.3 110.1,94.6 110.1,135.1 94.6,144.2 79.1,157.1 70.0,165.2 33.8,165.2 37.7,149.2" fill="#141414" /><polyline points="72.6,121.0 110.1,100.8" fill="none" stroke="#5a5a5e" stroke-width="1.81" /><polyline points="40.3,146.8 72.6,126.7" fill="none" stroke="#4a4a4e" stroke-width="1.29" /><polygon points="59.7,146.7 80.3,132.5 80.3,154.4 61.0,159.5" fill="#2e2c2c" /><polyline points="57.1,145.4 57.1,162.1" fill="none" stroke="#4e4a46" stroke-width="1.29" /><polyline points="48.0,149.3 48.0,162.1" fill="none" stroke="#5a5650" stroke-width="1.03" /><polyline points="72.6,124.9 110.1,104.9" fill="none" stroke="#2a2a2c" stroke-width="1.29" /><polygon points="110.1,138.8 97.2,146.1 84.2,158.5 80.9,165.2 110.1,165.2" fill="#c4ccd6" /><polyline points="84.0,165.2 84.0,153.2" fill="none" stroke="#50545a" stroke-width="0.65" /><polyline points="87.2,165.2 87.2,153.2" fill="none" stroke="#50545a" stroke-width="0.65" /><polyline points="90.5,165.2 90.5,153.2" fill="none" stroke="#50545a" stroke-width="0.65" /><polyline points="93.8,165.2 93.8,153.2" fill="none" stroke="#50545a" stroke-width="0.65" /><polyline points="97.0,165.2 97.0,153.2" fill="none" stroke="#50545a" stroke-width="0.65" /><polyline points="100.3,165.2 100.3,153.2" fill="none" stroke="#50545a" stroke-width="0.65" /><polyline points="103.6,165.2 103.6,153.2" fill="none" stroke="#50545a" stroke-width="0.65" /><polyline points="106.8,165.2 106.8,153.2" fill="none" stroke="#50545a" stroke-width="0.65" /><rect x="80.9" y="159.5" width="29.2" height="5.7" fill="#26282c" /><rect x="11.0" y="30.2" width="19.7" height="2.6" fill="#4c5056" /><rect x="12.1" y="32.3" width="17.6" height="6.2" fill="#a84030" /><rect x="15.7" y="33.3" width="10.3" height="3.1" fill="#d8d0c8" /><rect x="11.6" y="38.0" width="18.6" height="5.2" fill="#2c2c30" /><rect x="11.0" y="40.0" width="2.6" height="10.3" fill="#2c2c30" /><rect x="27.6" y="40.0" width="2.6" height="10.3" fill="#2c2c30" /><polyline points="17.8,42.6 12.9,159.5" fill="none" stroke="#2c3038" stroke-width="1.16" /><polyline points="25.0,42.6 28.9,159.5" fill="none" stroke="#2c3038" stroke-width="1.16" /><polyline points="17.8,42.6 25.4,55.6" fill="none" stroke="#2c3038" stroke-width="0.81" /><polyline points="25.0,42.6 17.2,55.6" fill="none" stroke="#2c3038" stroke-width="0.81" /><polyline points="17.2,55.6 25.4,55.6" fill="none" stroke="#2c3038" stroke-width="0.81" /><polyline points="17.2,55.6 25.9,68.6" fill="none" stroke="#2c3038" stroke-width="0.81" /><polyline points="25.4,55.6 16.7,68.6" fill="none" stroke="#2c3038" stroke-width="0.81" /><polyline points="16.7,68.6 25.9,68.6" fill="none" stroke="#2c3038" stroke-width="0.81" /><polyline points="16.7,68.6 26.3,81.6" fill="none" stroke="#2c3038" stroke-width="0.81" /><polyline points="25.9,68.6 16.1,81.6" fill="none" stroke="#2c3038" stroke-width="0.81" /><polyline points="16.1,81.6 26.3,81.6" fill="none" stroke="#2c3038" stroke-width="0.81" /><polyline points="16.1,81.6 26.7,94.6" fill="none" stroke="#2c3038" stroke-width="0.81" /><polyline points="26.3,81.6 15.6,94.6" fill="none" stroke="#2c3038" stroke-width="0.81" /><polyline points="15.6,94.6 26.7,94.6" fill="none" stroke="#2c3038" stroke-width="0.81" /><polyline points="15.6,94.6 27.2,107.6" fill="none" stroke="#2c3038" stroke-width="0.81" /><polyline points="26.7,94.6 15.0,107.6" fill="none" stroke="#2c3038" stroke-width="0.81" /><polyline points="15.0,107.6 27.2,107.6" fill="none" stroke="#2c3038" stroke-width="0.81" /><polyline points="15.0,107.6 27.6,120.5" fill="none" stroke="#2c3038" stroke-width="0.81" /><polyline points="27.2,107.6 14.5,120.5" fill="none" stroke="#2c3038" stroke-width="0.81" /><polyline points="14.5,120.5 27.6,120.5" fill="none" stroke="#2c3038" stroke-width="0.81" /><polyline points="14.5,120.5 28.0,133.5" fill="none" stroke="#2c3038" stroke-width="0.81" /><polyline points="27.6,120.5 13.9,133.5" fill="none" stroke="#2c3038" stroke-width="0.81" /><polyline points="13.9,133.5 28.0,133.5" fill="none" stroke="#2c3038" stroke-width="0.81" /><polyline points="13.9,133.5 28.5,146.5" fill="none" stroke="#2c3038" stroke-width="0.81" /><polyline points="28.0,133.5 13.4,146.5" fill="none" stroke="#2c3038" stroke-width="0.81" /><polyline points="13.4,146.5 28.5,146.5" fill="none" stroke="#2c3038" stroke-width="0.81" /><polyline points="13.4,146.5 28.9,159.5" fill="none" stroke="#2c3038" stroke-width="0.81" /><polyline points="28.5,146.5 12.9,159.5" fill="none" stroke="#2c3038" stroke-width="0.81" /><polyline points="12.9,159.5 28.9,159.5" fill="none" stroke="#2c3038" stroke-width="0.81" /><polyline points="25.0,96.9 41.0,162.1" fill="none" stroke="#161618" stroke-width="2.07" /><rect x="26.3" y="138.8" width="3.1" height="22.0" fill="#a89c84" /><rect x="-1.1" y="159.5" width="73.7" height="6.5" fill="#141614" /><polyline points="14.4,-0.8 7.9,123.3" fill="none" stroke="#90949a" stroke-width="0.52" /><polyline points="35.1,-0.8 26.0,29.7" fill="none" stroke="#8c9096" stroke-width="0.52" /></g></svg>
<div style="left:547px;top:72px;width:171px;height:40px;background:#fff;"></div>
<div style="left:549px;top:72px;width:167px;height:38px;background:#000;"></div>
<svg style="left:550px;top:72px" width="164" height="36" viewBox="0 0 164 36"><defs><filter id="g1a" x="-5%" y="-5%" width="110%" height="110%"><feGaussianBlur stdDeviation="0.5"/></filter><filter id="g1b" x="-5%" y="-5%" width="110%" height="110%"><feGaussianBlur stdDeviation="1.6"/></filter></defs><g filter="url(#g1a)"><rect x="-2" y="-2" width="170" height="42" fill="#7a4e14"/><polygon points="0.0,15.7 164.6,15.7 164.6,27.4 0.0,25.4" fill="#8e601c" /><polygon points="0.0,25.4 164.6,27.4 164.6,37.2 0.0,37.2" fill="#6e4610" /><ellipse cx="53.5" cy="18.6" rx="2.1" ry="1.8" fill="#9a6c20" /><ellipse cx="16.7" cy="27.1" rx="2.6" ry="1.1" fill="#5a3a0e" /><ellipse cx="68.7" cy="20.4" rx="3.3" ry="1.8" fill="#5a3a0e" /><ellipse cx="21.4" cy="20.0" rx="3.8" ry="1.0" fill="#9a6c20" /><ellipse cx="95.5" cy="16.6" rx="2.1" ry="1.8" fill="#b88428" /><ellipse cx="48.0" cy="18.5" rx="3.7" ry="1.5" fill="#4a300c" /><ellipse cx="111.0" cy="17.7" rx="4.0" ry="1.3" fill="#5a3a0e" /><ellipse cx="89.5" cy="16.9" rx="3.9" ry="1.5" fill="#4a300c" /><ellipse cx="86.9" cy="30.9" rx="3.8" ry="1.4" fill="#c08c30" /><ellipse cx="49.7" cy="31.2" rx="4.4" ry="1.1" fill="#9a6c20" /><ellipse cx="49.7" cy="25.3" rx="4.2" ry="1.3" fill="#3a2408" /><ellipse cx="158.9" cy="18.0" rx="2.5" ry="1.3" fill="#c08c30" /><ellipse cx="151.3" cy="23.9" rx="2.2" ry="1.5" fill="#9a6c20" /><ellipse cx="128.2" cy="31.7" rx="4.1" ry="1.6" fill="#3a2408" /><ellipse cx="94.6" cy="24.6" rx="2.3" ry="1.2" fill="#2e1c08" /><ellipse cx="113.4" cy="16.9" rx="4.2" ry="1.6" fill="#9a6c20" /><ellipse cx="160.9" cy="31.7" rx="4.2" ry="1.8" fill="#3a2408" /><ellipse cx="57.2" cy="34.1" rx="2.5" ry="1.1" fill="#3a2408" /><ellipse cx="11.0" cy="30.7" rx="4.3" ry="1.4" fill="#b88428" /><ellipse cx="148.7" cy="25.4" rx="3.4" ry="1.5" fill="#b88428" /><ellipse cx="143.3" cy="31.7" rx="3.7" ry="1.7" fill="#2e1c08" /><ellipse cx="159.9" cy="29.0" rx="5.0" ry="1.1" fill="#c08c30" /><ellipse cx="29.8" cy="20.2" rx="2.0" ry="1.8" fill="#b88428" /><ellipse cx="30.8" cy="21.2" rx="3.3" ry="1.3" fill="#b88428" /><ellipse cx="92.4" cy="34.3" rx="4.6" ry="1.9" fill="#9a6c20" /><ellipse cx="106.7" cy="30.1" rx="4.8" ry="1.7" fill="#c08c30" /><ellipse cx="141.9" cy="31.3" rx="3.2" ry="1.4" fill="#c08c30" /><ellipse cx="78.8" cy="23.5" rx="2.2" ry="1.2" fill="#b88428" /><ellipse cx="27.6" cy="22.3" rx="2.3" ry="1.5" fill="#4a300c" /><ellipse cx="87.7" cy="34.2" rx="2.0" ry="1.8" fill="#5a3a0e" /><ellipse cx="100.1" cy="18.6" rx="4.9" ry="1.6" fill="#3a2408" /><ellipse cx="77.7" cy="17.9" rx="5.1" ry="1.4" fill="#c08c30" /><ellipse cx="79.2" cy="17.3" rx="4.3" ry="1.7" fill="#4a300c" /><ellipse cx="78.4" cy="29.2" rx="2.0" ry="1.9" fill="#5a3a0e" /><ellipse cx="86.3" cy="18.5" rx="4.8" ry="1.7" fill="#5a3a0e" /><ellipse cx="49.4" cy="28.2" rx="4.1" ry="1.2" fill="#4a300c" /><ellipse cx="60.4" cy="18.9" rx="2.7" ry="1.5" fill="#2e1c08" /><ellipse cx="82.2" cy="28.1" rx="4.5" ry="1.9" fill="#5a3a0e" /><ellipse cx="138.4" cy="31.4" rx="3.2" ry="1.8" fill="#2e1c08" /><ellipse cx="33.6" cy="25.3" rx="2.0" ry="1.0" fill="#9a6c20" /><ellipse cx="46.4" cy="20.7" rx="3.9" ry="1.3" fill="#9a6c20" /><ellipse cx="131.3" cy="29.8" rx="4.9" ry="1.3" fill="#3a2408" /><ellipse cx="36.9" cy="20.1" rx="3.0" ry="1.5" fill="#b88428" /><ellipse cx="159.7" cy="27.6" rx="3.5" ry="1.6" fill="#4a300c" /><ellipse cx="129.9" cy="17.3" rx="2.3" ry="1.4" fill="#9a6c20" /><ellipse cx="115.7" cy="19.6" rx="3.3" ry="1.6" fill="#b88428" /><ellipse cx="15.5" cy="34.2" rx="3.2" ry="1.4" fill="#9a6c20" /><ellipse cx="153.5" cy="29.8" rx="5.1" ry="1.0" fill="#b88428" /><ellipse cx="96.4" cy="24.8" rx="2.4" ry="1.8" fill="#9a6c20" /><ellipse cx="158.9" cy="28.5" rx="2.4" ry="1.5" fill="#3a2408" /><ellipse cx="5.0" cy="31.3" rx="4.0" ry="1.5" fill="#9a6c20" /><ellipse cx="151.4" cy="24.1" rx="2.6" ry="1.8" fill="#2e1c08" /><ellipse cx="6.1" cy="19.8" rx="2.7" ry="1.6" fill="#5a3a0e" /><ellipse cx="43.2" cy="23.9" rx="2.1" ry="1.7" fill="#b88428" /><ellipse cx="145.6" cy="28.6" rx="4.8" ry="1.4" fill="#2e1c08" /><ellipse cx="148.8" cy="25.5" rx="2.4" ry="1.5" fill="#5a3a0e" /><ellipse cx="141.6" cy="30.9" rx="2.0" ry="1.8" fill="#5a3a0e" /><ellipse cx="29.2" cy="24.9" rx="2.3" ry="1.0" fill="#9a6c20" /><ellipse cx="111.1" cy="26.0" rx="4.4" ry="1.1" fill="#c08c30" /><ellipse cx="91.5" cy="20.5" rx="2.1" ry="1.1" fill="#3a2408" /><polygon points="99.4,0.0 126.8,0.0 164.6,25.4 164.6,31.3 115.1,15.7" fill="#8a5c1a" /><ellipse cx="120.3" cy="16.9" rx="3.7" ry="1.2" fill="#3a2408" /><ellipse cx="139.1" cy="18.5" rx="2.3" ry="1.0" fill="#c08c30" /><ellipse cx="142.0" cy="25.7" rx="2.6" ry="0.8" fill="#5a3a0e" /><ellipse cx="150.0" cy="24.5" rx="2.8" ry="1.3" fill="#3a2408" /><ellipse cx="112.6" cy="5.7" rx="2.3" ry="1.3" fill="#b88428" /><ellipse cx="149.9" cy="25.4" rx="2.9" ry="1.1" fill="#c08c30" /><ellipse cx="126.5" cy="18.0" rx="2.3" ry="1.0" fill="#5a3a0e" /><ellipse cx="122.6" cy="18.6" rx="2.1" ry="1.5" fill="#a87828" /><ellipse cx="138.4" cy="21.5" rx="3.1" ry="1.6" fill="#b88428" /><ellipse cx="121.9" cy="5.4" rx="3.6" ry="1.6" fill="#c08c30" /><ellipse cx="112.1" cy="23.9" rx="3.7" ry="0.8" fill="#c08c30" /><ellipse cx="130.6" cy="13.3" rx="1.9" ry="1.3" fill="#4a300c" /><ellipse cx="109.7" cy="21.6" rx="2.9" ry="1.5" fill="#3a2408" /><ellipse cx="122.5" cy="8.4" rx="2.4" ry="0.8" fill="#4a300c" /><polygon points="0.0,0.0 99.4,0.0 112.7,14.9 0.0,14.9" fill="#dcc49c" /><polygon points="0.0,-2.0 99.4,-2.0 103.3,4.7 0.0,5.5" fill="#7a5420" /><ellipse cx="7.4" cy="2.3" rx="5.9" ry="1.8" fill="#3e2a10" /><ellipse cx="29.0" cy="2.3" rx="7.8" ry="1.8" fill="#a88440" /><ellipse cx="54.4" cy="2.3" rx="6.8" ry="1.8" fill="#4a3414" /><ellipse cx="74.0" cy="2.3" rx="5.9" ry="1.8" fill="#c0a060" /><ellipse cx="89.6" cy="2.3" rx="4.9" ry="1.8" fill="#50381a" /><ellipse cx="19.2" cy="2.3" rx="3.9" ry="1.8" fill="#c8a868" /><polygon points="0.0,14.5 112.7,14.5 115.1,16.8 0.0,16.4" fill="#2a1a08" /><polyline points="1.6,6.3 99.4,5.9" fill="none" stroke="#b09468" stroke-width="0.98" /><polygon points="119.0,0.0 164.6,0.0 164.6,23.5" fill="#0c0804" /></g><g filter="url(#g1a)"><circle cx="64.2" cy="31.3" r="1.2" fill="#ffe8c0" /><circle cx="76.9" cy="31.7" r="1.2" fill="#ffe8c0" /><circle cx="91.6" cy="31.3" r="1.2" fill="#ffe8c0" /><circle cx="111.2" cy="31.3" r="1.2" fill="#ffe8c0" /><circle cx="128.8" cy="31.3" r="1.2" fill="#ffe8c0" /><circle cx="141.5" cy="30.9" r="1.2" fill="#ffe8c0" /><circle cx="152.3" cy="30.9" r="1.2" fill="#ffe8c0" /><circle cx="116.0" cy="8.8" r="1.2" fill="#ffe8c0" /><circle cx="118.0" cy="12.7" r="1.2" fill="#ffe8c0" /><circle cx="164.0" cy="31.3" r="1.2" fill="#ffe8c0" /></g></svg>
<div style="left:737px;top:72px;width:171px;height:40px;background:#fff;"></div>
<div style="left:739px;top:72px;width:167px;height:38px;background:#000;"></div>
<svg style="left:740px;top:72px" width="164" height="36" viewBox="0 0 164 36"><defs><filter id="g2a" x="-5%" y="-5%" width="110%" height="110%"><feGaussianBlur stdDeviation="0.5"/></filter><filter id="g2b" x="-5%" y="-5%" width="110%" height="110%"><feGaussianBlur stdDeviation="1.6"/></filter></defs><g filter="url(#g2b)"><rect x="-2" y="-2" width="170" height="42" fill="#140c06"/><rect x="93.5" y="1.0" width="71.0" height="6.8" fill="#2c2010" /><rect x="117.0" y="7.8" width="47.6" height="9.8" fill="#20180c" /><rect x="126.8" y="19.6" width="37.8" height="11.7" fill="#2a2010" /><polygon points="0.0,15.7 54.4,2.0 79.8,0.0 107.2,17.6 135.6,37.2 0.0,37.2" fill="#d0a454" /><polygon points="0.0,27.4 68.1,25.4 126.8,33.3 134.6,37.2 0.0,37.2" fill="#c08c34" /><polygon points="0.0,19.6 48.5,17.6 64.2,23.5 0.0,27.4" fill="#dcb878" /><ellipse cx="52.9" cy="27.5" rx="4.2" ry="2.2" fill="#e0b868" /><ellipse cx="23.1" cy="31.8" rx="4.7" ry="2.1" fill="#e0b868" /><ellipse cx="12.2" cy="23.0" rx="4.4" ry="2.2" fill="#a87828" /><ellipse cx="73.6" cy="28.1" rx="5.8" ry="1.9" fill="#e0b868" /><ellipse cx="71.4" cy="20.4" rx="5.3" ry="1.2" fill="#a87828" /><ellipse cx="5.6" cy="33.1" rx="2.8" ry="1.7" fill="#946818" /><ellipse cx="51.6" cy="32.4" rx="3.5" ry="1.5" fill="#946818" /><ellipse cx="2.1" cy="19.1" rx="4.0" ry="1.8" fill="#b88838" /><ellipse cx="30.4" cy="31.0" rx="3.6" ry="1.3" fill="#946818" /><ellipse cx="88.5" cy="24.7" rx="3.9" ry="2.3" fill="#b88838" /><ellipse cx="25.4" cy="33.6" rx="3.9" ry="2.0" fill="#e0b868" /><ellipse cx="49.2" cy="27.6" rx="5.2" ry="1.5" fill="#e8c888" /><ellipse cx="11.5" cy="23.5" rx="5.1" ry="1.3" fill="#e0b868" /><ellipse cx="29.5" cy="19.4" rx="4.2" ry="1.7" fill="#a87828" /><ellipse cx="79.0" cy="20.9" rx="3.3" ry="2.0" fill="#946818" /><ellipse cx="16.4" cy="28.9" rx="4.0" ry="2.3" fill="#a87828" /><ellipse cx="1.6" cy="32.8" rx="3.7" ry="2.2" fill="#946818" /><ellipse cx="25.5" cy="24.6" rx="4.7" ry="1.3" fill="#946818" /><ellipse cx="30.9" cy="31.2" rx="5.3" ry="1.6" fill="#b88838" /><ellipse cx="10.0" cy="21.3" rx="2.8" ry="1.6" fill="#e8c888" /><ellipse cx="72.2" cy="19.9" rx="4.3" ry="1.8" fill="#946818" /><ellipse cx="19.1" cy="33.6" rx="3.5" ry="1.4" fill="#946818" /><ellipse cx="85.5" cy="34.2" rx="4.9" ry="1.6" fill="#e8c888" /><ellipse cx="56.3" cy="19.0" rx="3.1" ry="1.2" fill="#a87828" /><ellipse cx="81.5" cy="22.1" rx="4.3" ry="1.8" fill="#946818" /><polygon points="58.3,1.0 81.8,1.0 87.7,11.7 75.9,17.6 60.3,15.7" fill="#d8c4a8" /><ellipse cx="81.8" cy="8.8" rx="4.3" ry="3.1" fill="#b0a8c0" /></g><g filter="url(#g2a)"><polygon points="0.0,0.0 54.8,0.0 60.7,15.7 0.0,19.2" fill="#f0e2c4" /><polyline points="1.6,2.9 52.4,2.3" fill="none" stroke="#9c8c78" stroke-width="1.17" /><polyline points="1.6,7.4 40.7,8.2" fill="none" stroke="#b4a48c" stroke-width="0.98" /><circle cx="43.6" cy="34.2" r="1.0" fill="#fff4d8" /><circle cx="59.3" cy="32.3" r="1.0" fill="#fff4d8" /><circle cx="78.9" cy="30.9" r="1.0" fill="#fff4d8" /><circle cx="96.5" cy="29.4" r="1.0" fill="#fff4d8" /><circle cx="108.2" cy="27.8" r="1.0" fill="#fff4d8" /><circle cx="119.0" cy="35.2" r="1.0" fill="#fff4d8" /><circle cx="68.1" cy="6.8" r="1.0" fill="#fff4d8" /><circle cx="62.2" cy="21.5" r="1.0" fill="#fff4d8" /><rect x="162.0" y="1.0" width="2.5" height="6.8" fill="#b04c1c" /></g></svg>
</div></body></html>
